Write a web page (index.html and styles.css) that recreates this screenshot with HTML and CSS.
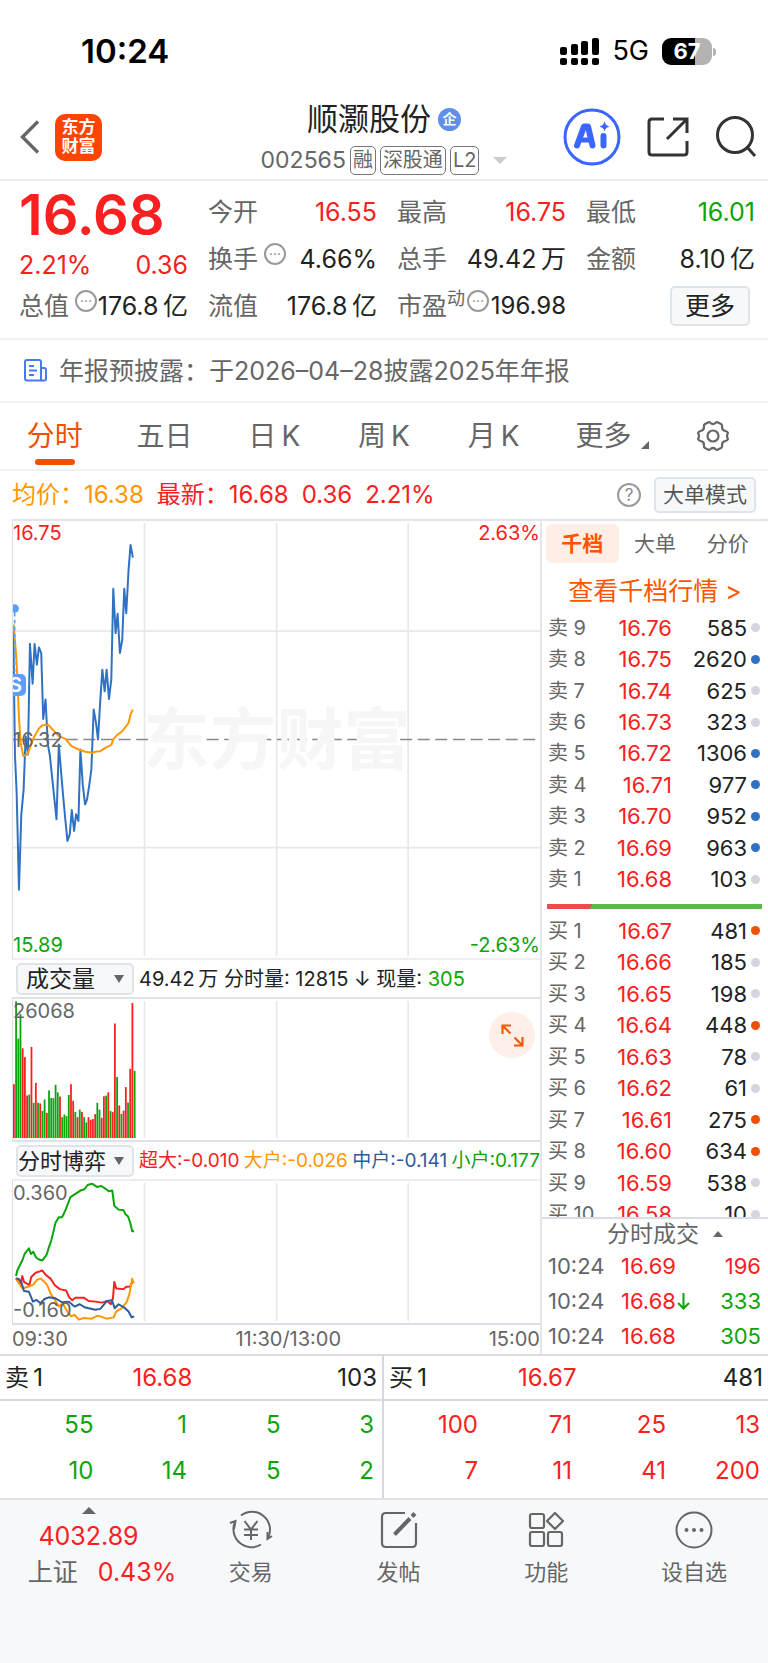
FILE: index.html
```html
<!DOCTYPE html>
<html lang="zh-CN">
<head>
    <meta charset="UTF-8">
    <meta name="viewport" content="width=device-width, initial-scale=1.0">
    <title>顺灏股份 002565</title>
    <link rel="stylesheet" href="styles.css">
</head>
<body>
    <!-- Status bar -->
    <div class="status">
        <span class="time">10:24</span>
        <div class="status-right">
            <svg class="signal" width="39" height="27" viewBox="0 0 39 27">
                <rect x="0" y="9" width="7" height="8" rx="2"/>
                <rect x="11" y="6" width="7" height="11" rx="2"/>
                <rect x="21" y="3" width="7" height="14" rx="2"/>
                <rect x="32" y="0" width="7" height="17" rx="2"/>
                <rect x="0" y="20" width="7" height="7" rx="2"/>
                <rect x="11" y="20" width="7" height="7" rx="2"/>
                <rect x="21" y="20" width="7" height="7" rx="2"/>
                <rect x="32" y="20" width="7" height="7" rx="2"/>
            </svg>
            <span class="network">5G</span>
            <span class="battery">67</span>
        </div>
    </div>

    <!-- Header -->
    <header class="header">
        <div class="header-left">
            <button class="icon-btn" aria-label="返回">
                <svg width="20" height="34" viewBox="0 0 20 34" fill="none" stroke="#666" stroke-width="3.4"><path d="M18 1.500L2.500 17L18 32.500"/></svg>
            </button>
            <span class="logo">东方<br>财富</span>
        </div>
        <div class="stock">
            <h1 class="stock-name">顺灏股份<span class="badge">企</span></h1>
            <div class="stock-code">
                <span>002565</span>
                <span class="tag">融</span>
                <span class="tag">深股通</span>
                <span class="tag">L2</span>
                <span class="code-arrow"></span>
            </div>
        </div>
        <div class="header-right">
            <button class="icon-btn" aria-label="AI">
                <svg width="58" height="58" viewBox="0 0 58 58">
                    <circle cx="29" cy="29" r="27" fill="none" stroke="#3a66ff" stroke-width="3"/>
                    <g fill="none" stroke="#3a66ff" stroke-width="6" stroke-linecap="round" stroke-linejoin="round">
                        <path d="M14 37.500L21 18.500H25L29.500 37.500"/>
                        <path d="M19 32H27" stroke-width="5"/>
                        <path d="M40.500 28V37.500"/>
                    </g>
                    <path d="M41.500 13C42.300 16.500 43.500 17.500 46.500 18.500C43.500 19.500 42.300 20.500 41.500 23.500C40.700 20.500 39.500 19.500 36.500 18.500C39.500 17.500 40.700 16.500 41.500 13Z" fill="#3a66ff"/>
                </svg>
            </button>
            <button class="icon-btn" aria-label="分享">
                <svg width="42" height="42" viewBox="0 0 42 42" fill="none" stroke="#333" stroke-width="3">
                    <path d="M17 3H5Q2 3 2 6V36Q2 39 5 39H37Q40 39 40 36V25"/>
                    <path d="M26 3H40V17M40 3L20 23"/>
                </svg>
            </button>
            <button class="icon-btn" aria-label="搜索">
                <svg width="42" height="42" viewBox="0 0 42 42" fill="none" stroke="#333" stroke-width="3">
                    <circle cx="20" cy="19" r="17.500"/>
                    <path d="M32 31L40 40"/>
                </svg>
            </button>
        </div>
    </header>

    <!-- Quote summary -->
    <section class="quote">
        <div class="quote-price">
            <div class="price-now">16.68</div>
            <div class="pair red"><span>2.21%</span><span>0.36</span></div>
        </div>
        <div class="pair"><span class="label">今开</span><span class="red">16.55</span></div>
        <div class="pair"><span class="label">最高</span><span class="red">16.75</span></div>
        <div class="pair"><span class="label">最低</span><span class="green">16.01</span></div>
        <div class="pair"><span class="label">换手<i class="more-dots">···</i></span><span>4.66%</span></div>
        <div class="pair"><span class="label">总手</span><span>49.42&thinsp;万</span></div>
        <div class="pair"><span class="label">金额</span><span>8.10&thinsp;亿</span></div>
        <div class="pair"><span class="label">总值<i class="more-dots">···</i></span><span>176.8&thinsp;亿</span></div>
        <div class="pair"><span class="label">流值</span><span>176.8&thinsp;亿</span></div>
        <div class="pair"><span class="label">市盈<sup>动</sup><i class="more-dots">···</i></span><span class="pe">196.98</span></div>
        <div class="quote-more"><button class="btn">更多</button></div>
    </section>

    <a class="notice" href="#">
        <svg width="23" height="23" viewBox="0 0 23 23" fill="none" stroke="#4a78f0" stroke-width="2">
            <path d="M17 21.500H3Q1 21.500 1 19.500V3Q1 1 3 1H15Q17 1 17 3Z"/>
            <path d="M17 9H20Q22 9 22 11V20Q22 21.500 20 21.500H17M5 7H10M5 11.500H13M5 16H10"/>
        </svg>
        <span>年报预披露：于2026–04–28披露2025年年报</span>
    </a>

    <!-- Period tabs -->
    <nav class="tabs">
        <button class="tab active">分时</button>
        <button class="tab">五日</button>
        <button class="tab">日&thinsp;K</button>
        <button class="tab">周&thinsp;K</button>
        <button class="tab">月&thinsp;K</button>
        <button class="tab tab-more">更多</button>
        <button class="icon-btn tab-set" aria-label="设置">
            <svg width="34" height="32" viewBox="0 0 34 32" fill="none" stroke="#666" stroke-width="2.200" stroke-linejoin="round">
                <path d="M12 2.500Q13.500 1.500 14.500 3Q17 5 19.500 3Q20.500 1.500 22 2.500L25 4Q26.500 5 26 7Q26 10.500 29.500 11Q31.500 11.500 32 13Q30 16 32 19Q31.500 20.500 29.500 21Q26 21.500 26 25Q26.500 27 25 28L22 29.500Q20.500 30.500 19.500 29Q17 27 14.500 29Q13.500 30.500 12 29.500L9 28Q7.500 27 8 25Q8 21.500 4.500 21Q2.500 20.500 2 19Q4 16 2 13Q2.500 11.500 4.500 11Q8 10.500 8 7Q7.500 5 9 4Z"/>
                <circle cx="17" cy="16" r="5.500"/>
            </svg>
        </button>
    </nav>

    <div class="summary">
        <span class="orange">均价：16.38</span>
        <span class="red">最新：16.68</span>
        <span class="red">0.36</span>
        <span class="red">2.21%</span>
        <button class="help" aria-label="帮助">?</button>
        <button class="btn btn-small">大单模式</button>
    </div>

    <main class="main">
        <div class="charts">
            <!-- Price chart -->
            <div class="chart chart-price">
                <span class="watermark">东方财富</span>
                <svg class="plot" viewBox="0 0 1587 1302" preserveAspectRatio="none">
                    <g class="grid-line">
                        <path d="M396 0V1302M794 0V1302M1190 0V1302M0 325H1587M0 976H1587"/>
                    </g>
                    <path class="mid-line" d="M0 651H1587"/>
                    <polyline class="line-blue" points="1,306 4,561 6,701 11,811 18,1103 25,876 32,801 38,641 45,696 51,363 59,483 65,364 72,426 78,374 85,391 91,589 98,531 105,666 111,699 131,891 138,666 145,751 151,821 158,896 164,956 171,936 177,863 184,926 190,876 197,896 203,681 210,786 217,846 223,831 230,786 236,741 243,561 250,601 256,651 263,531 269,441 276,506 282,441 289,529 296,471 302,198 309,331 315,273 322,391 329,351 335,198 341,271 348,141 354,66 361,104"/>
                    <polyline class="line-orange" points="2,306 9,391 13,461 18,586 23,661 31,701 43,696 51,676 58,656 65,641 78,618 88,609 98,607 108,609 123,625 138,641 158,649 176,671 198,681 218,688 238,691 251,687 263,686 278,676 296,667 303,649 313,638 328,627 341,611 348,601 354,576 361,561"/>
                    <circle cx="5" cy="257" r="13" fill="#5b9ff8"/>
                    <path d="M5 270V460" stroke="#5b9ff8" stroke-width="5" stroke-dasharray="11 10"/>
                </svg>
                <span class="sell-mark">S</span>
                <span class="tl red">16.75</span>
                <span class="tr red">2.63%</span>
                <span class="ml">16.32</span>
                <span class="bl green">15.89</span>
                <span class="br green">-2.63%</span>
            </div>

            <div class="indicator">
                <label class="picker">
                    <select aria-label="指标一"><option>成交量</option></select>
                </label>
                <span class="volume-text">49.42&thinsp;万 分时量: 12815 ↓ 现量: <span class="green">305</span></span>
            </div>

            <!-- Volume chart -->
            <div class="chart chart-volume">
                <svg class="plot" id="volume" viewBox="0 0 1587 420" preserveAspectRatio="none">
                    <path class="grid-line" d="M396 0V420M794 0V420M1190 0V420"/>
                </svg>
                <span class="tl">26068</span>
                <button class="expand" aria-label="全屏">
                    <svg width="23" height="23" viewBox="0 0 23 23" fill="none" stroke="#f25a0a" stroke-width="2.200">
                        <path d="M1.500 10V1.500H10M1.500 1.500L9.500 9.500M21.500 13V21.500H13M21.500 21.500L13.500 13.500"/>
                    </svg>
                </button>
            </div>

            <div class="indicator">
                <label class="picker">
                    <select class="wide" aria-label="指标二"><option>分时博弈</option></select>
                </label>
                <div class="legend">
                    <span class="red">超大:-0.010</span>
                    <span class="orange">大户:-0.026</span>
                    <span class="blue">中户:-0.141</span>
                    <span class="green">小户:0.177</span>
                </div>
            </div>

            <!-- Money flow chart -->
            <div class="chart chart-flow">
                <svg class="plot" viewBox="0 0 1587 420" preserveAspectRatio="none">
                    <path class="grid-line" d="M396 0V420M794 0V420M1190 0V420"/>
                    <polyline class="line-red" points="9,289 15,299 23,306 28,283 33,301 49,311 55,286 68,273 81,269 88,266 98,279 113,291 126,311 141,323 160,327 168,346 178,357 188,349 213,349 228,359 248,361 268,364 283,359 295,369 301,351 305,301 311,321 333,323 341,316 353,315 359,301 365,301"/>
                    <polyline class="line-orange" points="9,291 18,306 28,321 48,315 61,309 73,294 83,291 95,301 103,311 113,336 126,356 138,376 150,366 163,391 175,406 185,401 198,416 213,411 238,413 253,404 263,406 281,413 303,409 311,391 328,381 343,361 351,336 359,291 363,306"/>
                    <polyline class="line-navy" points="9,291 16,291 25,301 33,329 48,331 60,361 71,356 83,366 95,353 108,348 128,351 148,363 168,361 185,376 201,369 218,379 248,386 263,383 283,359 298,357 306,381 318,369 335,379 348,391 357,409 365,406"/>
                    <polyline class="line-green" points="9,283 13,266 20,251 28,236 35,216 48,199 54,216 61,209 69,226 78,233 88,236 101,219 108,196 115,176 121,151 128,121 138,104 148,104 158,83 173,43 188,33 203,23 215,19 225,6 238,2 253,12 266,9 278,17 288,25 299,23 305,69 318,81 333,83 338,94 346,101 353,121 359,147 365,147"/>
                </svg>
                <span class="tl">0.360</span>
                <span class="bl">-0.160</span>
            </div>
            <div class="axis"><span>09:30</span><span class="noon">11:30/13:00</span><span>15:00</span></div>
        </div>

        <!-- Order book -->
        <aside class="side">
            <div class="side-tabs">
                <button class="side-tab active">千档</button>
                <button class="side-tab">大单</button>
                <button class="side-tab">分价</button>
            </div>
            <a class="depth-link" href="#">查看千档行情 &gt;</a>
            <table class="book" id="asks"></table>
            <div class="ratio"></div>
            <div class="bids"><table class="book book-buy" id="bids"></table></div>
            <button class="deals-title">分时成交</button>
            <table class="deals">
                <tr><td>10:24</td><td class="red">16.69</td><td class="red">196</td></tr>
                <tr><td>10:24</td><td class="red">16.68<svg width="13" height="17" viewBox="0 0 13 17" fill="none" stroke="#0ba50b" stroke-width="2"><path d="M6.500 0V15.500M1 10L6.500 15.500L12 10"/></svg></td><td class="green">333</td></tr>
                <tr><td>10:24</td><td class="red">16.68</td><td class="green">305</td></tr>
            </table>
        </aside>
    </main>

    <!-- Level 2 queue -->
    <section class="queues">
        <div class="queue">
            <div class="queue-head"><span>卖&thinsp;1</span><span class="red">16.68</span><span>103</span></div>
            <div class="queue-body green">
                <span>55</span><span>1</span><span>5</span><span>3</span>
                <span>10</span><span>14</span><span>5</span><span>2</span>
            </div>
        </div>
        <div class="queue">
            <div class="queue-head"><span>买&thinsp;1</span><span class="red">16.67</span><span>481</span></div>
            <div class="queue-body red">
                <span>100</span><span>71</span><span>25</span><span>13</span>
                <span>7</span><span>11</span><span>41</span><span>200</span>
            </div>
        </div>
    </section>

    <!-- Bottom bar -->
    <footer class="footer">
        <button class="index">
            <span class="index-arrow"></span>
            <span class="red">4032.89</span>
            <span class="index-row"><span>上证</span><span class="red">0.43%</span></span>
        </button>
        <button class="action">
            <svg width="44" height="40" viewBox="0 0 44 40" fill="none" stroke="#666" stroke-width="2">
                <path d="M12 5.500A18 18 0 0 1 39 28M32 34.500A18 18 0 0 1 6 12"/>
                <path d="M1 13L6.500 11L5 19M43 26L38.500 29L38.500 22"/>
                <path d="M15.500 11L22 19.500L28.500 11M22 19.500V30M15 19.500H29M15 25H29"/>
            </svg>
            <span>交易</span>
        </button>
        <button class="action">
            <svg width="40" height="40" viewBox="0 0 40 40" fill="none" stroke="#666" stroke-width="2.200">
                <path d="M26 3H7Q3 3 3 7V33Q3 37 7 37H33Q37 37 37 33V13"/>
                <path d="M15.500 24.500L31 8.500" stroke-width="4"/>
                <path d="M33 6.500L36 3.500" stroke-width="4"/>
            </svg>
            <span>发帖</span>
        </button>
        <button class="action">
            <svg width="40" height="40" viewBox="0 0 40 40" fill="none" stroke="#666" stroke-width="2.200" stroke-linejoin="round">
                <rect x="4" y="4" width="14" height="14" rx="2"/>
                <rect x="4" y="22" width="14" height="14" rx="2"/>
                <rect x="22" y="22" width="14" height="14" rx="2"/>
                <path d="M29 3L37 11L29 19L21 11Z"/>
            </svg>
            <span>功能</span>
        </button>
        <button class="action">
            <svg width="40" height="40" viewBox="0 0 40 40">
                <circle cx="20" cy="20" r="17.500" fill="none" stroke="#666" stroke-width="2"/>
                <circle cx="12.500" cy="20" r="2" fill="#666"/>
                <circle cx="20" cy="20" r="2" fill="#666"/>
                <circle cx="27.500" cy="20" r="2" fill="#666"/>
            </svg>
            <span>设自选</span>
        </button>
    </footer>

    <script src="script.js"></script>
</body>
</html>
```

FILE: styles.css
```css
* {
    box-sizing: border-box;
}

body {
    margin: 0;
    background: #fff;
    color: #222;
    font-family: Inter, "Noto Sans CJK SC", sans-serif;
    font-size: 25px;
    line-height: 36px;
}

button,
select {
    font-family: inherit;
    font-size: inherit;
    line-height: inherit;
    color: inherit;
    background: none;
    border: none;
    padding: 0;
    margin: 0;
    cursor: pointer;
}

a {
    text-decoration: none;
}

svg {
    display: block;
}

.red {
    color: #fa2020;
}

.green {
    color: #0ba50b;
}

.orange {
    color: #ff9800;
}

.blue {
    color: #2f5a9c;
}

.icon-btn {
    display: flex;
}

/* Status bar */
.status {
    display: flex;
    justify-content: space-between;
    align-items: center;
    height: 81px;
    padding: 21px 56px 0 81px;
    color: #000;
}

.time {
    font-size: 33px;
    font-weight: 600;
}

.status-right {
    display: flex;
    align-items: center;
    gap: 13px;
}

.network {
    font-size: 27px;
}

.battery {
    position: relative;
    width: 50px;
    height: 27px;
    border-radius: 9px;
    background: linear-gradient(90deg, #000 67%, #b3b3b3 67%);
    color: #fff;
    font-size: 22px;
    font-weight: 700;
    line-height: 27px;
    text-align: center;
}

.battery::after {
    content: "";
    position: absolute;
    right: -4px;
    top: 10px;
    width: 3px;
    height: 8px;
    border-radius: 0 3px 3px 0;
    background: #b3b3b3;
}

/* Header */
.header {
    display: grid;
    grid-template-columns: 1fr auto 1fr;
    align-items: center;
    height: 100px;
    padding: 14px 11px 0;
    border-bottom: 2px solid #ececec;
}

.header-left,
.header-right {
    display: flex;
    align-items: center;
}

.header-left {
    gap: 15px;
    padding-left: 9px;
}

.header-right {
    justify-content: flex-end;
    gap: 26px;
}

.logo {
    width: 47px;
    height: 47px;
    border-radius: 10px;
    background: #ff4400;
    color: #fff;
    font-size: 17px;
    font-weight: 700;
    line-height: 19px;
    padding-top: 4px;
    text-align: center;
}

.stock-name {
    display: flex;
    justify-content: center;
    align-items: center;
    gap: 7px;
    margin: 0;
    font-size: 31px;
    font-weight: 400;
    line-height: 46px;
}

.badge {
    width: 23px;
    height: 23px;
    border-radius: 50%;
    background: #5f8fe8;
    color: #fff;
    font-size: 14px;
    font-weight: 700;
    line-height: 22px;
    text-align: center;
}

.stock-code {
    display: flex;
    align-items: center;
    gap: 4px;
    color: #666;
    font-size: 23px;
}

.tag {
    border: 1px solid #777;
    border-radius: 5px;
    padding: 0 2px;
    font-size: 20px;
    line-height: 27px;
}

.code-arrow {
    margin-left: 10px;
    border: 7px solid transparent;
    border-top-color: #ccc;
    border-bottom: none;
}

/* Quote summary */
.quote {
    display: grid;
    grid-template-columns: repeat(4, 1fr);
    grid-auto-rows: 47px;
    column-gap: 20px;
    padding: 7px 13px 9px 19px;
    border-bottom: 2px solid #f2f2f2;
}

.quote-price {
    grid-row: span 2;
    display: flex;
    flex-direction: column;
}

.price-now {
    margin-bottom: 5px;
    color: #fa2020;
    font-size: 56px;
    font-weight: 600;
    line-height: 54px;
}

.pair {
    display: flex;
    justify-content: space-between;
    align-items: center;
    white-space: nowrap;
}

.label {
    display: flex;
    color: #666;
}

.label sup {
    font-size: 18px;
    line-height: 22px;
}

.more-dots {
    width: 22px;
    height: 22px;
    margin: 2px 0 0 6px;
    border: 2px solid #999;
    border-radius: 50%;
    color: #888;
    font-size: 14px;
    font-style: normal;
    line-height: 18px;
    text-align: center;
}

.label sup + .more-dots {
    margin-left: 2px;
}

.pe {
    font-size: 24px;
}

.quote-more {
    display: flex;
    justify-content: flex-end;
    align-items: center;
    padding-right: 5px;
}

.btn {
    border: 2px solid #dfe3ea;
    border-radius: 5px;
    background: #f7f8fa;
    padding: 0 13px;
}

.btn-small {
    color: #555;
    font-size: 21px;
    line-height: 32px;
    padding: 0 7px;
}

.notice {
    display: flex;
    align-items: center;
    gap: 12px;
    height: 63px;
    padding: 0 24px;
    border-bottom: 2px solid #f2f2f2;
    color: #666;
}

/* Period tabs */
.tabs {
    display: grid;
    grid-template-columns: repeat(7, 1fr);
    justify-items: center;
    height: 68px;
    border-bottom: 2px solid #f2f2f2;
    color: #666;
    font-size: 28px;
}

.tab {
    position: relative;
}

.tab.active {
    color: #f25000;
}

.tab.active::after {
    content: "";
    position: absolute;
    left: 8px;
    right: 8px;
    bottom: 4px;
    height: 6px;
    border-radius: 3px;
    background: #f25000;
}

.tab-more::after {
    content: "";
    position: absolute;
    right: -18px;
    bottom: 20px;
    border: 4px solid #666;
    border-top-color: transparent;
    border-left-color: transparent;
}

.tab-set {
    align-items: center;
}

.summary {
    display: flex;
    align-items: center;
    gap: 13px;
    height: 48px;
    padding: 0 12px;
    font-size: 24px;
}

.help {
    width: 24px;
    height: 24px;
    margin-left: auto;
    border: 2px solid #999;
    border-radius: 50%;
    color: #888;
    font-size: 17px;
    line-height: 20px;
}

/* Charts */
.main {
    display: grid;
    grid-template-columns: minmax(0, 1fr) 226px;
    border-bottom: 2px solid #d9dce3;
}

.charts {
    margin-left: 12px;
    border-top: 2px solid #e3e5ea;
    border-right: 2px solid #e3e5ea;
}

.chart {
    position: relative;
    padding: 2px 0;
    overflow: hidden;
    border-left: 1px solid #dcdfe6;
    color: #666;
    font-size: 20px;
    line-height: 24px;
}

.chart-price {
    height: 439px;
    border-bottom: 2px solid #eceef2;
}

.chart-volume {
    height: 145px;
    border-top: 2px solid #e0e2e8;
    border-bottom: 2px solid #e0e2e8;
}

.chart-flow {
    height: 146px;
    border-top: 2px solid #eceef2;
    border-bottom: 2px solid #dcdfe6;
}

.plot {
    width: 100%;
    height: 100%;
    fill: none;
}

.plot polyline {
    stroke-width: 6;
    stroke-linejoin: round;
}

.grid-line {
    stroke: #e4e8ef;
    stroke-width: 5;
}

.mid-line {
    stroke: #888;
    stroke-width: 5;
    stroke-dasharray: 36 17;
}

.line-blue {
    stroke: #2f72c4;
}

.line-orange {
    stroke: #ff9800;
}

.line-red {
    stroke: #fa2020;
}

.line-navy {
    stroke: #2f5a9c;
}

.line-green {
    stroke: #0ba50b;
}

.tl,
.tr,
.ml,
.bl,
.br,
.watermark,
.sell-mark,
.expand {
    position: absolute;
}

.tl {
    top: 0;
    left: 0;
}

.tr {
    top: 0;
    right: 0;
}

.ml {
    top: 50%;
    left: 0;
    margin-top: -12px;
}

.bl {
    bottom: 1px;
    left: 0;
}

.br {
    bottom: 1px;
    right: 0;
}

.watermark {
    top: 0;
    right: 0;
    bottom: 0;
    left: 0;
    display: flex;
    justify-content: center;
    align-items: center;
    color: #f6f6f6;
    font-size: 67px;
    font-weight: 700;
}

.sell-mark {
    top: 35%;
    left: -8px;
    width: 21px;
    border-radius: 5px;
    background: #5b9ff8;
    color: #fff;
    font-weight: 600;
    line-height: 22px;
    text-align: center;
}

.expand {
    right: 5px;
    top: 13px;
    display: flex;
    justify-content: center;
    align-items: center;
    width: 46px;
    height: 46px;
    border-radius: 50%;
    background: #ffefe8;
}

.indicator {
    display: flex;
    align-items: center;
    gap: 5px;
    height: 37px;
    padding-left: 4px;
    font-size: 19px;
    white-space: nowrap;
}

.volume-text {
    font-size: 20px;
}

.picker {
    position: relative;
    flex: none;
    width: 118px;
}

.picker::after {
    content: "";
    position: absolute;
    right: 10px;
    top: 12px;
    border: 5px solid transparent;
    border-top: 8px solid #666;
    border-bottom: none;
    pointer-events: none;
}

.picker select {
    display: block;
    width: 100%;
    height: 32px;
    padding-left: 8px;
    border: 2px solid #dfe3ea;
    border-radius: 5px;
    background: #f7f8fa;
    appearance: none;
    font-size: 23px;
    line-height: 28px;
}

.picker select.wide {
    padding-left: 0;
    font-size: 22px;
}

.legend {
    display: flex;
    flex: 1;
    justify-content: space-between;
}

.axis {
    display: flex;
    justify-content: space-between;
    color: #666;
    font-size: 20px;
    line-height: 29px;
}

.noon {
    padding-left: 20px;
}

/* Order book */
.side {
    display: flex;
    flex-direction: column;
    border-top: 2px solid #e3e5ea;
}

.side-tabs {
    display: grid;
    grid-template-columns: repeat(3, 1fr);
    padding: 3px 4px 0;
    color: #666;
    font-size: 21px;
}

.side-tab {
    border-radius: 6px;
    line-height: 39px;
}

.side-tab.active {
    background: #ffeee6;
    color: #ff5500;
    font-weight: 700;
}

.depth-link {
    color: #ff5500;
    padding: 10px 0 3px;
    text-align: center;
}

.book {
    width: 100%;
    height: 283px;
    border-collapse: collapse;
    font-size: 22px;
    line-height: 24px;
}

.book td {
    padding: 0;
}

.book td:first-child {
    width: 62px;
    padding-left: 6px;
    color: #666;
    font-size: 20px;
}

.book td:nth-child(2) {
    width: 68px;
    color: #fa2020;
    text-align: right;
}

.book td:nth-child(3) {
    text-align: right;
}

.book td:last-child {
    width: 21px;
    padding-left: 4px;
}

.dot {
    display: block;
    width: 9px;
    height: 9px;
    border-radius: 50%;
    background: #d3d6dc;
}

.dot.sell {
    background: #2f72c4;
}

.dot.buy {
    background: #f25000;
}

.ratio {
    flex: none;
    height: 5px;
    margin: 9px 6px 6px 5px;
    background: linear-gradient(120deg, #ee4b4b 21%, #5bb947 21%);
}

.bids {
    flex: 1 1 0;
    min-height: 0;
    overflow: hidden;
}

.book-buy {
    height: 315px;
}

.deals-title {
    padding-left: 20px;
    border-top: 2px solid #d9dce3;
    color: #666;
    font-size: 23px;
    line-height: 30px;
}

.deals-title::after {
    content: "";
    display: inline-block;
    margin-left: 14px;
    vertical-align: 5px;
    border: 5px solid transparent;
    border-top: none;
    border-bottom: 6px solid #666;
}

.deals {
    width: 100%;
    border-collapse: collapse;
    color: #666;
    font-size: 22px;
    line-height: 35px;
}

.deals td {
    padding: 0;
}

.deals td:first-child {
    width: 79px;
    padding-left: 6px;
}

.deals td:last-child {
    padding-right: 7px;
    text-align: right;
}

.deals svg {
    display: inline-block;
    margin-left: 1px;
    vertical-align: -1px;
}

/* Level 2 queue */
.queues {
    display: grid;
    grid-template-columns: 1fr 1fr;
    font-size: 24px;
    border-bottom: 2px solid #e0e2e6;
}

.queue:first-child {
    border-right: 2px solid #d5d8df;
}

.queue-head {
    display: grid;
    grid-template-columns: 3fr 5fr 5fr;
    padding: 4px 5px 3px;
    border-bottom: 2px solid #d5d8df;
}

.queue-head span:nth-child(2) {
    text-align: center;
}

.queue-head span:last-child {
    text-align: right;
}

.queue-body {
    display: grid;
    grid-template-columns: repeat(4, 1fr);
    padding: 1px 8px 4px 0;
    line-height: 46px;
    text-align: right;
}

/* Bottom bar */
.footer {
    display: grid;
    grid-template-columns: 177px repeat(4, 1fr);
    padding-bottom: 74px;
    background: #f7f8fa;
    color: #666;
    font-size: 25px;
}

.index,
.action {
    display: flex;
    flex-direction: column;
    align-items: center;
}

.action {
    gap: 4px;
    padding-top: 10px;
    font-size: 22px;
}

.index-arrow {
    margin: 7px 0 4px;
    border: 7px solid transparent;
    border-top: none;
    border-bottom: 7px solid #666;
}

.index-row {
    display: flex;
    gap: 20px;
    padding-left: 27px;
}
```

FILE: script.js
```js
let asks = [
    [9, "16.76", 585], [8, "16.75", 2620], [7, "16.74", 625],
    [6, "16.73", 323], [5, "16.72", 1306], [4, "16.71", 977],
    [3, "16.70", 952], [2, "16.69", 963], [1, "16.68", 103]
];
let bids = [
    [1, "16.67", 481], [2, "16.66", 185], [3, "16.65", 198],
    [4, "16.64", 448], [5, "16.63", 78], [6, "16.62", 61],
    [7, "16.61", 275], [8, "16.60", 634], [9, "16.59", 538],
    [10, "16.58", 10]
];
let bigAsks = [8, 5, 4, 3, 2];
let bigBids = [1, 4, 7, 8];

function fillBook(id, name, rows, big, dotClass) {
    document.getElementById(id).innerHTML = rows.map(([level, price, amount]) => `
        <tr>
            <td>${name} ${level}</td>
            <td>${price}</td>
            <td>${amount}</td>
            <td><span class="dot ${big.includes(level) ? dotClass : ""}"></span></td>
        </tr>`).join("");
}

fillBook("asks", "卖", asks, bigAsks, "sell");
fillBook("bids", "买", bids, bigBids, "buy");

// One bar a minute: r = up, g = down
let volumes = "165r 419g 305g 380g 275r 248r 130r 133g 279r 108g 169r 108g 106r 83g 118g 77r " +
    "146g 123g 122g 163g 140g 127r 64g 72g 67g 132g 165r 114r 80g 64r 87g 80r 64g 48g 64r 56r " +
    "58r 73r 108g 87g 62r 128r 130g 140r 83g 80r 351r 187g 100r 74g 84r 156r 109g 212r 414r 206g";

document.getElementById("volume").innerHTML += volumes.split(" ").map((item, i) => {
    let height = parseInt(item);
    let color = item.endsWith("r") ? "#fa2020" : "#0ba50b";
    return `<rect x="${(i * 6.61).toFixed(1)}" y="${420 - height}" width="5.4" height="${height}" fill="${color}"/>`;
}).join("");
```
